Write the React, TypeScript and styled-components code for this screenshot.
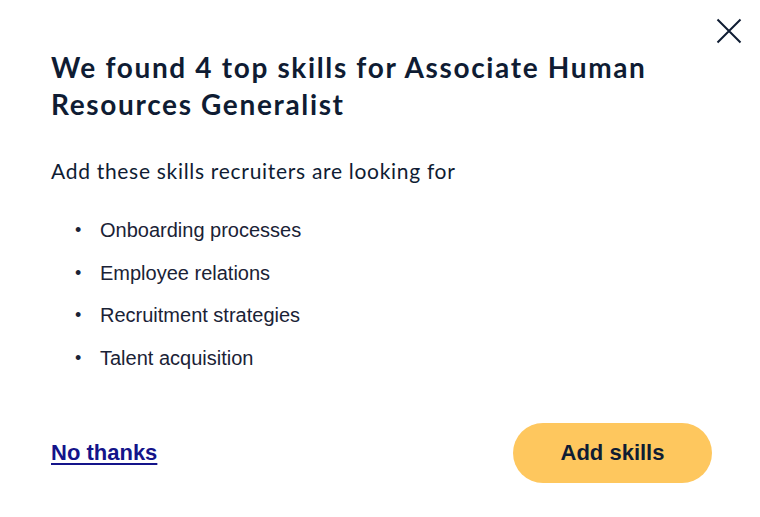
import styled, { createGlobalStyle } from 'styled-components'

const GlobalStyle = createGlobalStyle`
  html, body {
    margin: 0;
    padding: 0;
    background: #ffffff;
  }
  * {
    box-sizing: border-box;
  }
`

const Dialog = styled.div`
  position: relative;
  width: 760px;
  height: 517px;
  padding: 49px 40px 0 51px;
  background: #ffffff;
  color: #0f1c33;
`

const CloseButton = styled.button`
  position: absolute;
  top: 14px;
  right: 14px;
  width: 34px;
  height: 34px;
  padding: 0;
  border: none;
  background: transparent;
  display: flex;
  align-items: center;
  justify-content: center;
  cursor: pointer;
`

const Title = styled.h2`
  margin: 0;
  max-width: 650px;
  font-family: Lato, 'Noto Sans', sans-serif;
  font-weight: 700;
  font-size: 28px;
  line-height: 37px;
  letter-spacing: 1.65px;
  color: #0f1c33;
`

const Lead = styled.p`
  margin: 34px 0 0;
  font-family: Lato, 'Noto Sans', sans-serif;
  font-size: 21px;
  line-height: 28px;
  letter-spacing: 0.7px;
  color: #0f1c33;
`

const SkillList = styled.ul`
  margin: 34px 0 0;
  padding: 0 0 0 24px;
  list-style: none;
  font-family: 'Liberation Sans', Arial, sans-serif;
  font-size: 20px;
  color: #1a2236;
`

const Skill = styled.li`
  display: flex;
  align-items: center;
  line-height: 22px;
  margin-bottom: 20.5px;

  &::before {
    content: '•';
    width: 25px;
    font-size: 18px;
  }
`

const Footer = styled.div`
  display: flex;
  align-items: center;
  justify-content: space-between;
  margin-top: 54px;
  padding-right: 8px;
`

const NoThanks = styled.a`
  font-family: 'Liberation Sans', Arial, sans-serif;
  font-weight: 700;
  font-size: 22px;
  color: #14148a;
  text-decoration: underline;
  text-underline-offset: 3px;
  text-decoration-thickness: 2px;
  cursor: pointer;
`

const AddButton = styled.button`
  width: 199px;
  height: 60px;
  border: none;
  border-radius: 30px;
  background: #fec75e;
  color: #0f1c33;
  font-family: 'Liberation Sans', Arial, sans-serif;
  font-weight: 700;
  font-size: 22px;
  cursor: pointer;
`

const skills = [
  'Onboarding processes',
  'Employee relations',
  'Recruitment strategies',
  'Talent acquisition',
]

const App = (): JSX.Element => {
  return (
    <>
      <GlobalStyle />
      <Dialog>
        <CloseButton aria-label='Close'>
          <svg width='26' height='26' viewBox='0 0 26 26'>
            <path d='M1.5 1.5 L24.5 24.5 M24.5 1.5 L1.5 24.5' stroke='#0f1c33' strokeWidth='2' />
          </svg>
        </CloseButton>
        <Title>We found 4 top skills for Associate Human Resources Generalist</Title>
        <Lead>Add these skills recruiters are looking for</Lead>
        <SkillList>
          {skills.map((skill) => (
            <Skill key={skill}>{skill}</Skill>
          ))}
        </SkillList>
        <Footer>
          <NoThanks>No thanks</NoThanks>
          <AddButton>Add skills</AddButton>
        </Footer>
      </Dialog>
    </>
  )
}

export default App
